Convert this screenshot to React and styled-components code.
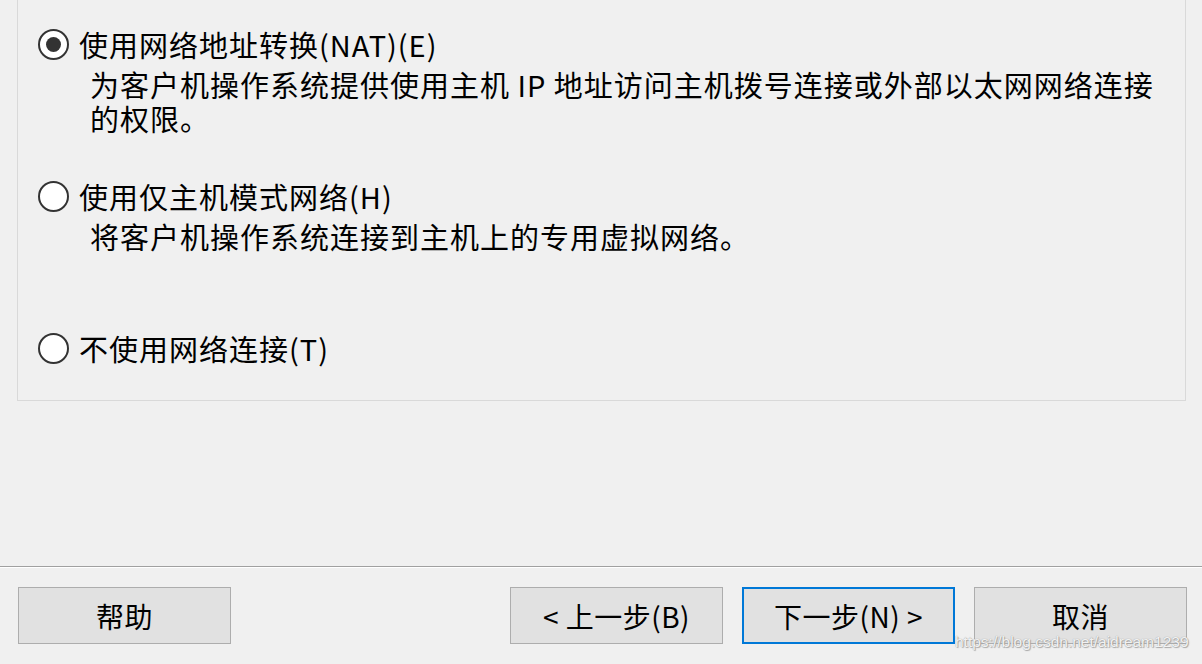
import styled, { createGlobalStyle } from "styled-components";

const GlobalStyle = createGlobalStyle`
  html, body {
    margin: 0;
    padding: 0;
    background: #f0f0f0;
  }
  body {
    font-family: "Noto Sans CJK SC", "Noto Sans", sans-serif;
    color: #000;
  }
`;

const options = [
  {
    label: "使用网络地址转换(NAT)(E)",
    desc: "为客户机操作系统提供使用主机 IP 地址访问主机拨号连接或外部以太网网络连接的权限。",
    checked: true,
    gap: 27,
  },
  {
    label: "使用仅主机模式网络(H)",
    desc: "将客户机操作系统连接到主机上的专用虚拟网络。",
    gap: 44,
  },
  {
    label: "不使用网络连接(T)",
    gap: 78,
  },
];

function App() {
  return (
    <Page>
      <GlobalStyle />
      <GroupBox>
        {options.map((o) => (
          <Option key={o.label} $gap={o.gap}>
            <LabelRow>
              <Radio $checked={o.checked} />
              <Label>{o.label}</Label>
            </LabelRow>
            {o.desc && <Desc>{o.desc}</Desc>}
          </Option>
        ))}
      </GroupBox>
      <Separator />
      <Footer>
        <Button>帮助</Button>
        <Spacer />
        <Button>&lt; 上一步(B)</Button>
        <Button $primary>下一步(N) &gt;</Button>
        <Button>取消</Button>
      </Footer>
      <Watermark>https://blog.csdn.net/aidream1239</Watermark>
    </Page>
  );
}

const Page = styled.div`
  position: relative;
  height: 664px;
  width: 1202px;
  display: flex;
  flex-direction: column;
  overflow: hidden;
`;

const GroupBox = styled.div`
  margin: 0 16px 0 17px;
  height: 401px;
  border: 1px solid #d9d9d9;
  border-top: none;
  display: flex;
  flex-direction: column;
  padding-left: 20px;
  box-sizing: border-box;
`;

const Option = styled.div`
  margin-top: ${(p) => p.$gap}px;
  display: flex;
  flex-direction: column;
`;

const LabelRow = styled.div`
  display: flex;
  align-items: center;
  gap: 10px;
  height: 34px;
`;

const Radio = styled.span`
  width: 31px;
  height: 31px;
  box-sizing: border-box;
  border: 2px solid #333;
  border-radius: 50%;
  background: #fff;
  display: flex;
  align-items: center;
  justify-content: center;
  flex-shrink: 0;
  &::after {
    content: "";
    display: ${(p) => (p.$checked ? "block" : "none")};
    width: 15px;
    height: 15px;
    border-radius: 50%;
    background: #333;
  }
`;

const Label = styled.span`
  font-size: 29px;
  letter-spacing: 1px;
  line-height: 34px;
  white-space: nowrap;
`;

const Desc = styled.p`
  margin: 6px 0 0 52px;
  max-width: 1082px;
  font-size: 29px;
  letter-spacing: 1px;
  line-height: 34px;
`;

const Separator = styled.div`
  margin-top: 165px;
  height: 1px;
  background: #a0a0a0;
  border-bottom: 1px solid #fff;
`;

const Footer = styled.div`
  display: flex;
  align-items: center;
  gap: 19px;
  padding: 19px 15px 0 18px;
`;

const Spacer = styled.div`
  flex: 1;
`;

const Button = styled.button`
  width: 213px;
  height: 57px;
  box-sizing: border-box;
  background: #e1e1e1;
  border: ${(p) => (p.$primary ? "2px solid #0078d7" : "1px solid #adadad")};
  font-family: "Noto Sans CJK SC", "Noto Sans", sans-serif;
  font-size: 28px;
  letter-spacing: 0.5px;
  color: #000;
  padding: 0;
  display: flex;
  align-items: center;
  justify-content: center;
`;

const Watermark = styled.span`
  position: absolute;
  z-index: 1;
  left: 955px;
  top: 633px;
  font-family: "Liberation Sans", Arial, sans-serif;
  font-size: 15.5px;
  color: rgba(255, 255, 255, 0.9);
  text-shadow: 0 0 1px #888, 1px 1px 1px #aaa;
  white-space: nowrap;
`;

export default App;
